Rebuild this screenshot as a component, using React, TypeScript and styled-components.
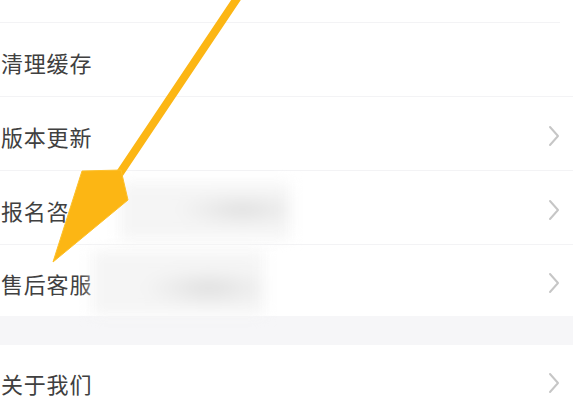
import React from "react";
import styled, { createGlobalStyle } from "styled-components";

const Global = createGlobalStyle`
  html, body { margin: 0; padding: 0; background: #ffffff; }
  body { font-family: "Noto Sans CJK SC", "Noto Sans", sans-serif; overflow: hidden; }
`;

const Page = styled.div`
  position: relative;
  width: 573px;
  height: 399px;
  overflow: hidden;
  background: #ffffff;
  display: flex;
  flex-direction: column;
`;

const Stub = styled.div`
  height: 22px;
  flex: none;
  margin-right: 13px;
  border-bottom: 1px solid #f3f3f5;
`;

const Row = styled.div<{ $last?: boolean }>`
  position: relative;
  flex: none;
  display: flex;
  align-items: center;
  justify-content: space-between;
  padding: 4px 13px 0 1px;
  box-sizing: border-box;
  border-bottom: ${(p) => (p.$last ? "none" : "1px solid #f3f3f5")};
  height: ${(p) => (p.$last ? "71px" : "74px")};
`;

const Label = styled.span`
  font-size: 22px;
  line-height: 1;
  color: #404040;
  letter-spacing: 0.8px;
  position: relative;
  z-index: 1;
`;

const Band = styled.div`
  height: 29px;
  flex: none;
  background: #f6f6f8;
`;

const Blur = styled.div<{ $l: number; $t: number; $w: number; $h: number; $sx: number; $sy: number }>`
  position: absolute;
  left: ${(p) => p.$l}px;
  top: ${(p) => p.$t}px;
  width: ${(p) => p.$w}px;
  height: ${(p) => p.$h}px;
  background:
    radial-gradient(ellipse 40% 30% at ${(p) => p.$sx}% ${(p) => p.$sy}%, #dedede 0%, rgba(232,232,232,0.7) 55%, rgba(245,245,245,0) 100%),
    #f5f5f5;
  filter: blur(7px);
  z-index: 2;
`;

const Arrow = styled.svg`
  position: absolute;
  left: 0;
  top: 0;
  z-index: 3;
  pointer-events: none;
`;

const Chevron = () => (
  <svg width="12" height="22" viewBox="0 0 12 22" style={{ zIndex: 1 }}>
    <polyline points="2,2 10,11 2,20" fill="none" stroke="#c6c6c6" strokeWidth="2" strokeLinecap="round" strokeLinejoin="round" />
  </svg>
);

export default function App() {
  return (
    <>
      <Global />
      <Page>
        <Stub />
        <Row>
          <Label>清理缓存</Label>
        </Row>
        <Row>
          <Label>版本更新</Label>
          <Chevron />
        </Row>
        <Row>
          <Label>报名咨询</Label>
          <Blur $l={120} $t={12} $w={170} $h={56} $sx={72} $sy={48} />
          <Chevron />
        </Row>
        <Row $last>
          <Label>售后客服</Label>
          <Blur $l={92} $t={6} $w={172} $h={64} $sx={68} $sy={58} />
          <Chevron />
        </Row>
        <Band />
        <Row $last>
          <Label>关于我们</Label>
          <Chevron />
        </Row>
        <Arrow width="573" height="399" viewBox="0 0 573 399">
          <line x1="240" y1="-6" x2="118" y2="176" stroke="#FCB614" strokeWidth="8" strokeLinecap="round" />
          <polygon points="82,171 121,170 128,200 53,262" fill="#FCB614" stroke="#FDC02A" strokeWidth="1" strokeLinejoin="round" />
        </Arrow>
      </Page>
    </>
  );
}
